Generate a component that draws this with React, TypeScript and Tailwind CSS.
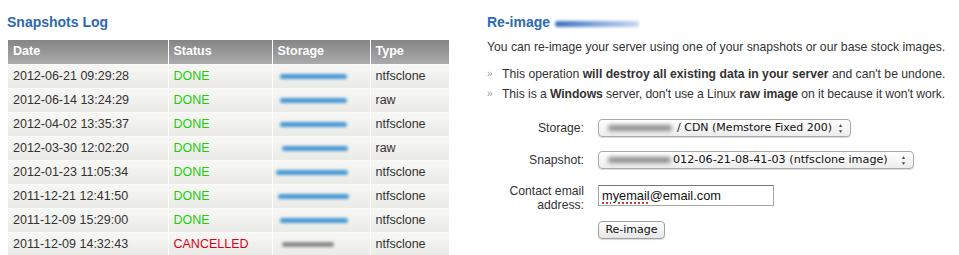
const rows = [
  { date: '2012-06-21 09:29:28', status: 'DONE', type: 'ntfsclone', blur: 'ml-[1px] w-[67px]' },
  { date: '2012-06-14 13:24:29', status: 'DONE', type: 'raw', blur: 'ml-[1px] w-[67px]' },
  { date: '2012-04-02 13:35:37', status: 'DONE', type: 'ntfsclone', blur: 'ml-[1px] w-[67px]' },
  { date: '2012-03-30 12:02:20', status: 'DONE', type: 'raw', blur: 'ml-[3px] w-[66px]' },
  { date: '2012-01-23 11:05:34', status: 'DONE', type: 'ntfsclone', blur: 'ml-[-3px] w-[72px]' },
  { date: '2011-12-21 12:41:50', status: 'DONE', type: 'ntfsclone', blur: 'ml-[-1px] w-[71px]' },
  { date: '2011-12-09 15:29:00', status: 'DONE', type: 'ntfsclone', blur: 'ml-[1px] w-[68px]' },
  { date: '2011-12-09 14:32:43', status: 'CANCELLED', type: 'ntfsclone', blur: 'ml-[3px] w-[52px] gray' },
];

function Blur({ cls }: { cls: string }) {
  const gray = cls.includes('gray');
  return (
    <div
      className={`h-[5px] rounded-full blur-[1.5px] ${cls.replace(' gray', '')} ${
        gray ? 'bg-[#8a8a8a]' : 'bg-[#4a9ad6]'
      }`}
    />
  );
}

function SelectBox({
  width,
  blurW,
  text,
  textSize,
}: {
  width: string;
  blurW: string;
  text: string;
  textSize: string;
}) {
  return (
    <div
      className={`${width} h-[18px] flex items-center rounded-[4px] border border-[#a9a9a9] bg-gradient-to-b from-white to-[#ececec] shadow-[0_1px_1px_rgba(0,0,0,0.15)] pl-[9px] pr-[7px]`}
    >
      <div className={`${blurW} shrink-0 h-[6px] rounded-full bg-[#8c8c8c] blur-[2px]`} />
      <span
        className={`${textSize} text-[#111] whitespace-nowrap`}
        style={{ fontFamily: '"DejaVu Sans", sans-serif' }}
      >
        {text}
      </span>
      <span className="ml-auto pl-[4px] shrink-0 flex flex-col items-center leading-[6px] text-[#444] text-[5px]">
        <span>▲</span>
        <span>▼</span>
      </span>
    </div>
  );
}

export default function App() {
  return (
    <div
      className="w-[959px] h-[255px] bg-white flex text-[#333] overflow-hidden"
      style={{ fontFamily: '"Liberation Sans", Arial, sans-serif' }}
    >
      {/* Snapshots log */}
      <div className="w-[449px] pl-[8px] pt-[13px] shrink-0">
        <h2 className="text-[14px] font-bold text-[#2d68b4] leading-[18px] ml-[-1px]">Snapshots Log</h2>
        <table className="mt-[9px] w-[441px] border-collapse text-[12.5px]">
          <thead>
            <tr className="h-[24px] bg-gradient-to-b from-[#858585] to-[#ababab] text-white font-bold">
              <th className="w-[160px] text-left pl-[5px] font-bold">Date</th>
              <th className="w-[104px] text-left pl-[5px] border-l-[1px] border-white font-bold">Status</th>
              <th className="w-[98px] text-left pl-[5px] border-l-[1px] border-white font-bold">Storage</th>
              <th className="text-left pl-[5px] border-l-[1px] border-white font-bold">Type</th>
            </tr>
          </thead>
          <tbody>
            {rows.map((r) => (
              <tr
                key={r.date + r.status}
                className="h-[24px] bg-gradient-to-b from-[#f7f7f5] to-[#eaeae6] border-t border-[#fafaf8]"
              >
                <td className="pl-[5px]">{r.date}</td>
                <td
                  className={`pl-[5px] border-l-[1px] border-white ${
                    r.status === 'DONE' ? 'text-[#1fcc0e]' : 'text-[#d7001a]'
                  }`}
                >
                  {r.status}
                </td>
                <td className="pl-[6px] border-l-[1px] border-white">
                  <Blur cls={r.blur} />
                </td>
                <td className="pl-[5px] border-l-[1px] border-white">{r.type}</td>
              </tr>
            ))}
          </tbody>
        </table>
      </div>

      {/* Re-image */}
      <div className="ml-[38px] pt-[13px] text-[12.2px]">
        <div className="flex items-center">
          <h2 className="text-[14px] font-bold text-[#2d68b4] leading-[18px]">Re-image</h2>
          <div className="ml-[5px] mt-[3px] w-[84px] h-[6px] rounded-full bg-gradient-to-r from-[#3a6fc0] to-[#c9d8f0] blur-[1.5px]" />
        </div>
        <p className="mt-[8px] leading-[16px] whitespace-nowrap">
          You can re-image your server using one of your snapshots or our base stock images.
        </p>
        <ul className="mt-[11px] space-y-[4px] leading-[16px] whitespace-nowrap">
          <li className="flex">
            <span className="w-[15px] text-[#999] text-[10px]">»</span>
            <span>
              This operation <b>will destroy all existing data in your server</b> and can't be undone.
            </span>
          </li>
          <li className="flex">
            <span className="w-[15px] text-[#999] text-[10px]">»</span>
            <span className="tracking-[-0.08px]">
              This is a <b>Windows</b> server, don't use a Linux <b>raw image</b> on it because it won't work.
            </span>
          </li>
        </ul>

        <div className="mt-[17px] grid grid-cols-[97px_auto] gap-x-[14px] items-center">
          <label className="text-right leading-[15px]">Storage:</label>
          <div className="h-[18px] flex items-center">
            <SelectBox
              width="w-[253px]"
              blurW="w-[64px] mr-[5px]"
              textSize="text-[11px]"
              text="/ CDN (Memstore Fixed 200)"
            />
          </div>

          <label className="mt-[14px] text-right leading-[15px]">Snapshot:</label>
          <div className="mt-[14px]">
            <SelectBox
              width="w-[316px]"
              blurW="w-[63px] mr-[2px]"
              textSize="text-[11.2px]"
              text="012-06-21-08-41-03 (ntfsclone image)"
            />
          </div>

          <label className="mt-[15px] text-right leading-[14px]">
            Contact email
            <br />
            address:
          </label>
          <div className="mt-[15px] self-start pt-[1px]">
            <div
              className="w-[176px] h-[21px] border border-[#a5a5a5] border-t-[#777] px-[3px] flex items-center text-[12.8px] text-[#111]"
            >
              <span
                style={{
                  textDecoration: 'underline dotted #e03030',
                  textDecorationThickness: '2px',
                  textUnderlineOffset: '3px',
                }}
              >
                myemail
              </span>
              <span>@email.com</span>
            </div>
          </div>

          <div />
          <div className="mt-[8px]">
            <button
              className="h-[18px] w-[67px] rounded-[4px] border border-[#a0a0a0] bg-gradient-to-b from-white to-[#e6e6e6] shadow-[0_1px_1px_rgba(0,0,0,0.15)] text-[11px] text-[#111] leading-none"
              style={{ fontFamily: '"DejaVu Sans", sans-serif' }}
            >
              Re-image
            </button>
          </div>
        </div>
      </div>
    </div>
  );
}
